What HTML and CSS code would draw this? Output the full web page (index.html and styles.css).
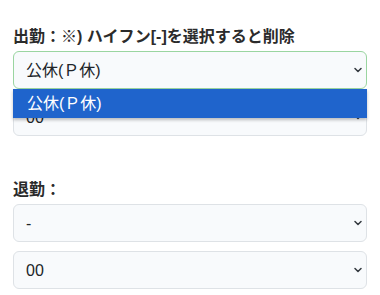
FILE: index.html
```html
<!DOCTYPE html>
<html lang="ja">
<head>
  <meta charset="UTF-8" />
  <meta name="viewport" content="width=device-width, initial-scale=1.0"/>
  <title>勤務時間の編集</title>
  <link rel="stylesheet" href="styles.css">
</head>
<body>
  <div class="form">
    <div class="group">
      <label class="label" for="startType">出勤：※) ハイフン[-]を選択すると削除</label>
      <div class="select-wrap is-open">
        <select id="startType" class="select is-focus">
          <option>公休(Ｐ休)</option>
        </select>
        <svg class="chevron" width="8" height="6" viewBox="0 0 8 6"><path d="M1 1.5 L4 4.5 L7 1.5" fill="none" stroke="#343a40" stroke-width="1.5" stroke-linecap="round" stroke-linejoin="round"/></svg>
        <ul class="dropdown">
          <li class="option active">公休(Ｐ休)</li>
        </ul>
      </div>
      <div class="select-wrap">
        <select class="select">
          <option>00</option>
        </select>
        <svg class="chevron" width="8" height="6" viewBox="0 0 8 6"><path d="M1 1.5 L4 4.5 L7 1.5" fill="none" stroke="#343a40" stroke-width="1.5" stroke-linecap="round" stroke-linejoin="round"/></svg>
      </div>
    </div>

    <div class="group">
      <label class="label" for="endType">退勤：</label>
      <div class="select-wrap">
        <select id="endType" class="select">
          <option>-</option>
        </select>
        <svg class="chevron" width="8" height="6" viewBox="0 0 8 6"><path d="M1 1.5 L4 4.5 L7 1.5" fill="none" stroke="#343a40" stroke-width="1.5" stroke-linecap="round" stroke-linejoin="round"/></svg>
      </div>
      <div class="select-wrap">
        <select class="select">
          <option>00</option>
        </select>
        <svg class="chevron" width="8" height="6" viewBox="0 0 8 6"><path d="M1 1.5 L4 4.5 L7 1.5" fill="none" stroke="#343a40" stroke-width="1.5" stroke-linecap="round" stroke-linejoin="round"/></svg>
      </div>
    </div>
  </div>
</body>
</html>
```

FILE: styles.css
```css
body {
  font-family: "Liberation Sans", "Noto Sans CJK JP", sans-serif;
  color: #212529;
  background-color: #fff;
  margin: 0;
  padding: 0;
}

.form {
  padding: 25px 13px 0 13px;
}

.group {
  margin-bottom: 42px; /* space before next label */
}

.label {
  display: block;
  font-size: 16px;
  font-weight: bold;
  line-height: 24px;
  color: #2b2b2b;
  margin-bottom: 2px;
}

.select-wrap {
  position: relative;
  margin-bottom: 9px;
}

.select {
  display: block;
  width: 100%;
  height: 38px;
  padding: 0 36px 0 12px;
  font-family: inherit;
  font-size: 16px;
  color: #212529;
  background-color: #f8fafc;
  border: 1px solid #dee2e6;
  border-radius: 6px;
  box-sizing: border-box;
  appearance: none;
  -webkit-appearance: none;
  outline: none;
}

.select.is-focus {
  border-color: #9ad5a0; /* green focus */
}

.chevron {
  position: absolute;
  right: 5px;
  top: 16px;
  pointer-events: none;
}

.dropdown {
  position: absolute;
  left: 0;
  right: 0;
  top: 38px;
  z-index: 10;
  list-style: none;
  margin: 0;
  padding: 0;
  box-shadow: 0 2px 3px rgba(0, 0, 0, 0.25);
}

.option {
  height: 29px;
  line-height: 29px;
  padding-left: 14px;
  font-size: 16px;
}

.option.active {
  background-color: #1f64cc;
  color: white;
}
```
